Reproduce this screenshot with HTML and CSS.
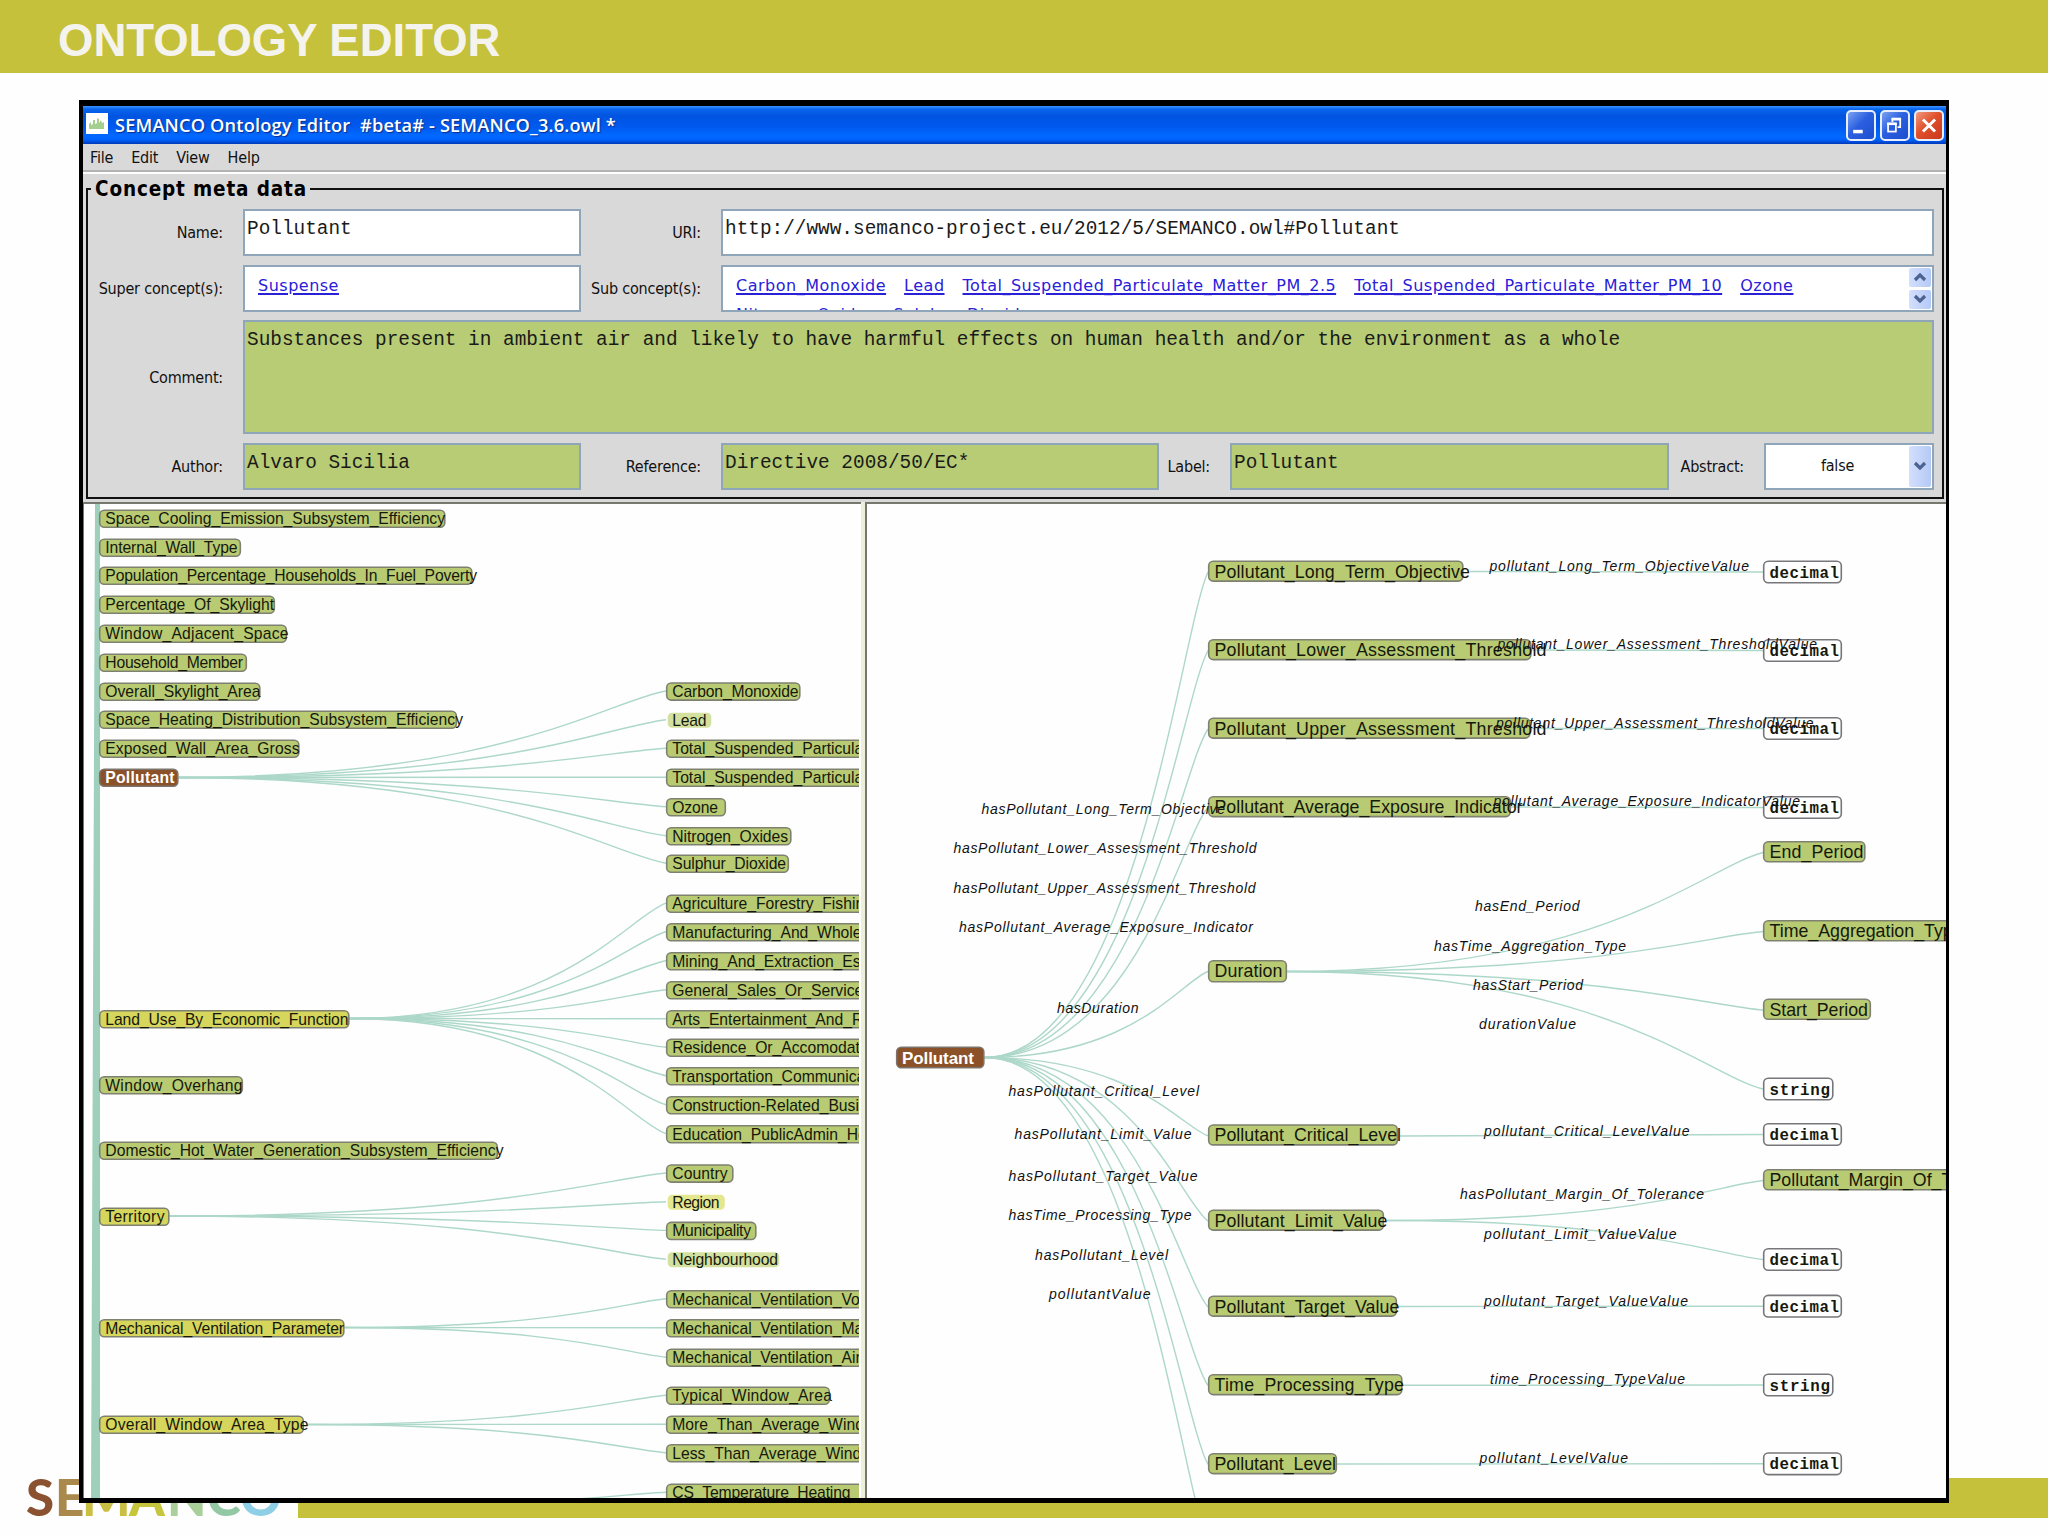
FILE: index.html
```html
<!DOCTYPE html>
<html lang="en">

<head>
    <meta charset="UTF-8">
    <meta name="viewport" content="width=device-width, initial-scale=1.0">
    <title>Ontology Editor</title>
    <link rel="stylesheet" href="styles.css">
</head>

<body>

    <div class="header">ONTOLOGY EDITOR</div>

    <div class="window">
        <div class="titlebar">
            <svg class="app-icon" viewBox="0 0 22 21">
                <rect width="22" height="21" fill="#fff"/>
                <path d="M3 16V11l2-2v3l2-1V7h2v4l2-1V5l2 1v4l2-3 1 3 2-1v7z" fill="#a5cf8e"/>
            </svg>
            <span class="title">SEMANCO Ontology Editor  #beta# - SEMANCO_3.6.owl *</span>
            <div class="win-buttons">
                <button class="win-btn">
                    <svg viewBox="0 0 30 30"><path d="M6 20h11v4H6z" fill="#fff"/></svg>
                </button>
                <button class="win-btn">
                    <svg viewBox="0 0 30 30" fill="none" stroke="#fff">
                        <path d="M12 11V8h9v9h-3" stroke-width="2"/>
                        <path d="M11 7.5h11" stroke-width="3"/>
                        <rect x="7" y="13" width="9" height="9" stroke-width="2"/>
                        <path d="M6 13h11" stroke-width="3"/>
                    </svg>
                </button>
                <button class="win-btn close">
                    <svg viewBox="0 0 30 30"><path d="M8 8l14 14M22 8L8 22" stroke="#fff" stroke-width="3.4"/></svg>
                </button>
            </div>
        </div>

        <div class="menubar">
            <span>File</span>
            <span>Edit</span>
            <span>View</span>
            <span>Help</span>
        </div>

        <div class="meta">
            <fieldset class="meta-box">
                <legend>Concept meta data</legend>
                <div class="meta-grid">
                    <label>Name:</label>
                    <div class="field">Pollutant</div>
                    <label>URI:</label>
                    <div class="field wide">http://www.semanco-project.eu/2012/5/SEMANCO.owl#Pollutant</div>

                    <label>Super concept(s):</label>
                    <div class="field links"><a href="#">Suspense</a></div>
                    <label>Sub concept(s):</label>
                    <div class="field links wide">
                        <div class="link-list">
                            <a href="#">Carbon_Monoxide</a>
                            <a href="#">Lead</a>
                            <a href="#">Total_Suspended_Particulate_Matter_PM_2.5</a>
                            <a href="#">Total_Suspended_Particulate_Matter_PM_10</a>
                            <a href="#">Ozone</a>
                            <a href="#">Nitrogen_Oxides</a>
                            <a href="#">Sulphur_Dioxide</a>
                        </div>
                        <div class="scroll">
                            <div class="arrow"><svg viewBox="0 0 22 18"><path d="M6 12l5-5 5 5"/></svg></div>
                            <div class="arrow"><svg viewBox="0 0 22 18"><path d="M6 6l5 5 5-5"/></svg></div>
                        </div>
                    </div>

                    <label>Comment:</label>
                    <div class="field green full">Substances present in ambient air and likely to have harmful effects on human health and/or the environment as a whole</div>

                    <label>Author:</label>
                    <div class="field green">Alvaro Sicilia</div>
                    <label>Reference:</label>
                    <div class="field green">Directive 2008/50/EC*</div>
                    <label>Label:</label>
                    <div class="field green">Pollutant</div>
                    <label>Abstract:</label>
                    <div class="field select">
                        <span>false</span>
                        <div class="arrow"><svg viewBox="0 0 22 18"><path d="M6 6l5 5 5-5"/></svg></div>
                    </div>
                </div>
            </fieldset>
        </div>

        <div class="panes">
            <div class="pane tree">
                <svg id="tree" viewBox="84 504 775 994" width="775" height="994"></svg>
            </div>
            <div class="splitter"></div>
            <div class="pane graph">
                <svg id="graph" viewBox="867 504 1079 994" width="1079" height="994"></svg>
            </div>
        </div>
    </div>

    <div class="footer">
        <svg class="logo" viewBox="0 0 298 40" width="298" height="40">
            <text y="37.5">
                <tspan x="26" fill="#8a5230">S</tspan><tspan x="55" fill="#a98a4c">E</tspan><tspan x="82" fill="#c9bf42">M</tspan><tspan x="129" fill="#c5c63c">A</tspan><tspan x="167" fill="#a9d09a">N</tspan><tspan x="207" fill="#93c8a4">C</tspan><tspan x="240" fill="#8fcfe6">O</tspan>
            </text>
        </svg>
        <div class="footer-bar"></div>
    </div>

    <script src="script.js"></script>

</body>

</html>
```
FILE: styles.css
```css
body {
    font-family: "Liberation Sans", Arial, sans-serif;
    background: #fefefe;
    margin: 0;
    height: 1536px;
    overflow: hidden;
}

.header {
    height: 73px;
    line-height: 81px;
    padding-left: 58px;
    background: #c5c13a;
    color: #f5f3ee;
    font-size: 45.5px;
    font-weight: bold;
    white-space: nowrap;
}

.window {
    position: relative;
    z-index: 1;
    box-sizing: border-box;
    width: 1870px;
    height: 1403px;
    margin: 27px 0 0 79px;
    border: solid #000;
    border-width: 6px 3px 5px 4px;
    background: #dad9d9;
    display: flex;
    flex-direction: column;
}

.titlebar {
    height: 38px;
    flex: none;
    display: flex;
    align-items: center;
    padding: 0 2px 0 3px;
    background: linear-gradient(#3d95ff 0, #0a66ee 3px, #0054e0 10px, #0058ee 20px, #0069ff 30px, #0060fa 34px, #0038b8 38px);
}

.app-icon {
    width: 22px;
    height: 21px;
    margin-top: -4px;
}

.title {
    flex: 1;
    margin-left: 7px;
    color: #fff;
    font-family: "Open Sans", "Noto Sans", sans-serif;
    font-size: 18.2px;
    font-weight: 600;
    letter-spacing: 0.17px;
    white-space: pre;
    text-shadow: 1px 1px 1px #0a2f8c;
}

.win-buttons {
    display: flex;
    gap: 4px;
}

.win-btn {
    box-sizing: border-box;
    width: 30px;
    height: 31px;
    padding: 0;
    border: 2px solid #e8eefc;
    border-radius: 5px;
    background: linear-gradient(135deg, #7ba2f2, #2b5fe0 45%, #1c4fd0);
}

.win-btn svg {
    display: block;
    width: 26px;
    height: 27px;
}

.win-btn.close {
    background: linear-gradient(135deg, #f09a80, #e0502c 45%, #c8381a);
}

.menubar {
    box-sizing: border-box;
    height: 30px;
    flex: none;
    display: flex;
    gap: 18px;
    padding: 4px 0 0 7px;
    border-bottom: 2px solid #fff;
    box-shadow: inset 0 -2px #b4b3b3;
}

.menubar span,
.meta label,
.select span {
    font-family: "DejaVu Sans Condensed", "DejaVu Sans", sans-serif;
    font-stretch: condensed;
    font-size: 16px;
    letter-spacing: -0.2px;
    color: #111;
}

.meta {
    height: 328px;
    flex: none;
}

.meta-box {
    box-sizing: border-box;
    height: 322px;
    margin: 3px 2px 0 3px;
    padding: 0;
    border: 2px solid #111;
    min-width: 0;
}

.meta-box legend {
    margin-left: 3px;
    padding: 0 3px 0 4px;
    font-family: "DejaVu Sans Condensed", "DejaVu Sans", sans-serif;
    font-stretch: condensed;
    font-weight: bold;
    font-size: 20.5px;
    letter-spacing: 0.85px;
    line-height: 24px;
}

.meta-grid {
    display: grid;
    grid-template-columns: 155px 338px 140px 438px 71px 439px 95px 170px;
    grid-template-rows: 47px 47px 114px 47px;
    row-gap: 8.5px;
    padding-top: 8px;
}

.meta label {
    align-self: center;
    text-align: right;
    padding-right: 20px;
    white-space: nowrap;
}

.field {
    box-sizing: border-box;
    border: 2px solid #8fa5ba;
    background: #fff;
    font-family: "Liberation Mono", "Courier New", monospace;
    font-size: 19.4px;
    line-height: 22px;
    padding: 7px 3px 0 2px;
    white-space: nowrap;
    overflow: hidden;
    color: #1a1a1a;
}

.green {
    background: #b7cc74;
}

.wide {
    grid-column: 4 / -1;
}

.full {
    grid-column: 2 / -1;
}

.links {
    display: flex;
    padding: 4px 0 0 13px;
    font-family: "DejaVu Sans", Verdana, sans-serif;
    font-size: 16px;
    line-height: 29px;
    letter-spacing: 0.5px;
}

.links a {
    color: #2a20d8;
    text-decoration: underline;
    text-decoration-thickness: 2px;
    text-underline-offset: 2px;
}

.link-list {
    flex: 1;
    display: flex;
    flex-wrap: wrap;
    column-gap: 18px;
    padding-right: 60px;
}

.scroll {
    display: flex;
    flex-direction: column;
    gap: 3px;
    margin: -3px 1px 0 0;
}

.arrow {
    width: 22px;
    height: 19px;
    border-radius: 2px;
    background: linear-gradient(90deg, #d3dffc, #b5c9f6);
    display: flex;
    align-items: center;
}

.arrow path {
    fill: none;
    stroke: #4a6391;
    stroke-width: 3.2;
}

.arrow svg {
    width: 22px;
    height: 18px;
}

.select {
    display: flex;
    align-items: center;
    padding: 0 1px 0 0;
}

.select span {
    flex: 1;
    text-align: center;
}

.select .arrow {
    height: 41px;
}

.panes {
    flex: 1;
    display: flex;
    min-height: 0;
}

.pane {
    box-sizing: border-box;
    background: #fefefe;
    border: solid #77776f;
    border-width: 2px 0 0 1px;
}

.pane svg {
    display: block;
    overflow: hidden;
}

.tree {
    width: 778px;
}

.splitter {
    width: 4px;
    background: #ecefda;
}

.graph {
    flex: 1;
    border-left-width: 2px;
}

/* graph drawing */

.edge {
    fill: none;
    stroke: #add8c9;
    stroke-width: 1.4;
}

.trunk {
    fill: #9fd0bb;
}

.box {
    fill: #b8cb72;
    stroke: #7f8170;
    stroke-width: 1.6;
}

.box.yellow {
    fill: #d6d55c;
}

.box.brown {
    fill: #8b5128;
    stroke: #7c746c;
}

.box.type {
    fill: #fefefe;
    stroke: #77777b;
}

.box.light {
    fill: #d3e09e;
    stroke: none;
}

.box.pale {
    fill: #e5e790;
    stroke: none;
}

.node-text {
    fill: #15180c;
    font-size: 15.7px;
}

#graph .node-text {
    font-size: 17.8px;
}

.node-text.brown {
    fill: #fff;
    font-weight: bold;
}

#graph .node-text.brown {
    font-size: 17px;
}

#graph .node-text.type {
    font-family: "Liberation Mono", "Courier New", monospace;
    font-weight: bold;
    font-size: 15.8px;
}

.edge-label {
    fill: #111;
    font-size: 14px;
    font-style: italic;
}

.footer {
    display: flex;
    height: 40px;
    margin-top: -25px;
}

.logo {
    overflow: visible;
    font-family: Lato, sans-serif;
    font-weight: 900;
    font-size: 51px;
}

.footer-bar {
    flex: 1;
    background: #c5c13a;
}
```
FILE: script.js
```javascript
const NS = 'http://www.w3.org/2000/svg';

function add(svg, tag, attrs, text) {
    const el = document.createElementNS(NS, tag);
    for (const key in attrs) {
        if (attrs[key] !== undefined) el.setAttribute(key, attrs[key]);
    }
    if (text) el.textContent = text;
    svg.appendChild(el);
}

// curve leaves the parent flat and bends into the child
function edge(svg, x1, y1, x2, y2) {
    const dx = x2 - x1, dy = y2 - y1;
    add(svg, 'path', {
        class: 'edge',
        d: `M${x1} ${y1}C${x1 + dx * 2 / 3} ${y1} ${x2 - dx / 8} ${y2 - dy / 8} ${x2} ${y2}`
    });
}

// right = box right side, end = where the text ends (left out when it runs past the pane)
function node(svg, x, top, h, label, right, end, cls) {
    const big = svg.id === 'graph';
    const pad = cls === 'light' || cls === 'pale' ? 1 : 0;
    add(svg, 'rect', {
        class: 'box ' + (cls || ''),
        x: x + 0.7 + pad, y: top + 0.7 + pad,
        width: right - x - 1.4 - pad, height: h - 1.4 - 2 * pad,
        rx: 4.5
    });
    const tx = x + (big ? (x < 900 ? 6 : 6.5) : 6.3);
    add(svg, 'text', {
        class: 'node-text ' + (cls || ''),
        x: tx, y: top + (big ? 17 : 14.5),
        textLength: end ? end - tx : undefined
    }, label);
}

const tree = document.getElementById('tree');
const graph = document.getElementById('graph');

const concepts = [
    [509.5, 'Space_Cooling_Emission_Subsystem_Efficiency', 445.5, 445],
    [538.5, 'Internal_Wall_Type', 241, 237.5],
    [566.5, 'Population_Percentage_Households_In_Fuel_Poverty', 472.5, 477],
    [595.5, 'Percentage_Of_Skylight', 275, 274],
    [624.5, 'Window_Adjacent_Space', 287, 288.5],
    [653.5, 'Household_Member', 247, 243],
    [682.5, 'Overall_Skylight_Area', 260.5, 260.5],
    [710.5, 'Space_Heating_Distribution_Subsystem_Efficiency', 457, 463],
    [739.5, 'Exposed_Wall_Area_Gross', 299.5, 299.5],
    [768.5, 'Pollutant', 178.5, 174.5, 'brown'],
    [1010, 'Land_Use_By_Economic_Function', 349.5, 348.5, 'yellow'],
    [1076, 'Window_Overhang', 243, 242.5],
    [1141.5, 'Domestic_Hot_Water_Generation_Subsystem_Efficiency', 498, 503.5],
    [1207.5, 'Territory', 169.5, 164.5, 'yellow'],
    [1319, 'Mechanical_Ventilation_Parameter', 344.5, 344, 'yellow'],
    [1415.5, 'Overall_Window_Area_Type', 304, 308.5, 'yellow']
];

// [parent x, parent y, children]
const branches = [
    [178.5, 777.5, [
        [682.3, 'Carbon_Monoxide', 800.5, 798.5],
        [711, 'Lead', 712, 706.5, 'light'],
        [739.5, 'Total_Suspended_Particulate_Matter_PM_2.5', 960],
        [768.5, 'Total_Suspended_Particulate_Matter_PM_10', 960],
        [798, 'Ozone', 726, 718],
        [827, 'Nitrogen_Oxides', 791.5, 788],
        [854.5, 'Sulphur_Dioxide', 789, 786]
    ]],
    [349.5, 1018.5, [
        [894.5, 'Agriculture_Forestry_Fishing', 960],
        [923, 'Manufacturing_And_Wholesale', 960],
        [952, 'Mining_And_Extraction_Establishment', 960],
        [981, 'General_Sales_Or_Services', 960],
        [1010, 'Arts_Entertainment_And_Recreation', 960],
        [1038.5, 'Residence_Or_Accomodation', 960],
        [1067, 'Transportation_Communication', 960],
        [1096, 'Construction-Related_Business', 960],
        [1125, 'Education_PublicAdmin_Health', 960]
    ]],
    [169.5, 1216, [
        [1164.3, 'Country', 733.5, 727.5],
        [1193, 'Region', 725.5, 719.5, 'pale'],
        [1221.7, 'Municipality', 756.5, 751],
        [1250.5, 'Neighbourhood', 780, 778, 'light']
    ]],
    [344.5, 1327.5, [
        [1290, 'Mechanical_Ventilation_Volume', 960],
        [1319, 'Mechanical_Ventilation_Max', 960],
        [1348.5, 'Mechanical_Ventilation_Air', 960]
    ]],
    [308, 1424.5, [
        [1386.5, 'Typical_Window_Area', 830, 832],
        [1415.5, 'More_Than_Average_Window', 960],
        [1444, 'Less_Than_Average_Window', 960]
    ]],
    [300, 1507, [
        [1483.5, 'CS_Temperature_Heating', 960, 850.5]
    ]]
];

add(tree, 'polygon', { class: 'trunk', points: '95,503 100,503 100,1500 91,1500' });
branches.forEach(([px, py, kids]) => kids.forEach(k => edge(tree, px, py, 666, k[0] + 8.7)));
concepts.forEach(c => node(tree, 99, c[0], 18.5, c[1], c[2], c[3], c[4]));
branches.forEach(b => b[2].forEach(k => node(tree, 666, k[0], 18.5, k[1], k[2], k[3], k[4])));

const properties = [
    [560.5, 'Pollutant_Long_Term_Objective', 1463.5, 1470],
    [639, 'Pollutant_Lower_Assessment_Threshold', 1531.5, 1546.5],
    [717.5, 'Pollutant_Upper_Assessment_Threshold', 1530.5, 1546.5],
    [796, 'Pollutant_Average_Exposure_Indicator', 1511, 1522.5],
    [960, 'Duration', 1287, 1282.5],
    [1124.3, 'Pollutant_Critical_Level', 1398, 1401],
    [1209.5, 'Pollutant_Limit_Value', 1384, 1387.5],
    [1295.5, 'Pollutant_Target_Value', 1397, 1399.5],
    [1374, 'Time_Processing_Type', 1402.5, 1404],
    [1453, 'Pollutant_Level', 1337, 1336]
];

// [parent x, parent y, top, label, right, end, class]
const ranges = [
    [1470, 571.5, 560.5, 'decimal', 1842, 1839, 'type'],
    [1531, 650, 639, 'decimal', 1842, 1839, 'type'],
    [1530, 728.5, 717, 'decimal', 1842, 1839, 'type'],
    [1511, 807, 796, 'decimal', 1842, 1839, 'type'],
    [1287, 971.5, 841, 'End_Period', 1865.5, 1863.5],
    [1287, 971.5, 920, 'Time_Aggregation_Type', 2000],
    [1287, 971.5, 998.5, 'Start_Period', 1871, 1868],
    [1287, 971.5, 1077.5, 'string', 1833.5, 1830, 'type'],
    [1400, 1136, 1123, 'decimal', 1842, 1839, 'type'],
    [1387, 1220.5, 1169, 'Pollutant_Margin_Of_Tolerance', 2040],
    [1387, 1220.5, 1248, 'decimal', 1842, 1839, 'type'],
    [1399, 1306.5, 1294.7, 'decimal', 1842, 1839, 'type'],
    [1403, 1385.3, 1373.5, 'string', 1833.5, 1830, 'type'],
    [1337, 1464, 1452.3, 'decimal', 1842, 1839, 'type']
];

// [x start, x end, baseline, text]
const labels = [
    [981.5, 1225, 814, 'hasPollutant_Long_Term_Objective'],
    [953.5, 1256.5, 853.3, 'hasPollutant_Lower_Assessment_Threshold'],
    [953.5, 1255.5, 892.5, 'hasPollutant_Upper_Assessment_Threshold'],
    [959, 1253, 932, 'hasPollutant_Average_Exposure_Indicator'],
    [1057, 1138.5, 1013, 'hasDuration'],
    [1008.5, 1199, 1096, 'hasPollutant_Critical_Level'],
    [1014.5, 1191.5, 1138.5, 'hasPollutant_Limit_Value'],
    [1008.5, 1197.5, 1180.5, 'hasPollutant_Target_Value'],
    [1008.5, 1191.5, 1220, 'hasTime_Processing_Type'],
    [1035, 1168, 1259.5, 'hasPollutant_Level'],
    [1049, 1150.5, 1298.5, 'pollutantValue'],
    [1489.5, 1749, 570.7, 'pollutant_Long_Term_ObjectiveValue'],
    [1497.5, 1817, 649, 'pollutant_Lower_Assessment_ThresholdValue'],
    [1496, 1813.5, 727.7, 'pollutant_Upper_Assessment_ThresholdValue'],
    [1493.5, 1800, 806.3, 'pollutant_Average_Exposure_IndicatorValue'],
    [1475, 1579.5, 911, 'hasEnd_Period'],
    [1434, 1626, 950.5, 'hasTime_Aggregation_Type'],
    [1473, 1583, 989.7, 'hasStart_Period'],
    [1479, 1576, 1029, 'durationValue'],
    [1484, 1689.5, 1135.7, 'pollutant_Critical_LevelValue'],
    [1460, 1704, 1199.3, 'hasPollutant_Margin_Of_Tolerance'],
    [1484, 1676.5, 1239, 'pollutant_Limit_ValueValue'],
    [1484, 1688, 1306, 'pollutant_Target_ValueValue'],
    [1490, 1685, 1384.3, 'time_Processing_TypeValue'],
    [1479.5, 1628, 1463, 'pollutant_LevelValue']
];

properties.forEach(p => edge(graph, 984.5, 1057.5, 1208, p[0] + 11.5));
edge(graph, 984.5, 1057.5, 1208, 1543);
ranges.forEach(r => edge(graph, r[0], r[1], 1763, r[2] + 11.5));
node(graph, 896, 1046.5, 22, 'Pollutant', 984.5, 974, 'brown');
properties.forEach(p => node(graph, 1208, p[0], p[1] === 'Duration' ? 22.5 : 21.3, p[1], p[2], p[3]));
ranges.forEach(r => node(graph, 1763, r[2], r[6] ? 23 : 21.5, r[3], r[4], r[5], r[6]));
labels.forEach(l => add(graph, 'text', { class: 'edge-label', x: l[0], y: l[2], textLength: l[1] - l[0] }, l[3]));
```
